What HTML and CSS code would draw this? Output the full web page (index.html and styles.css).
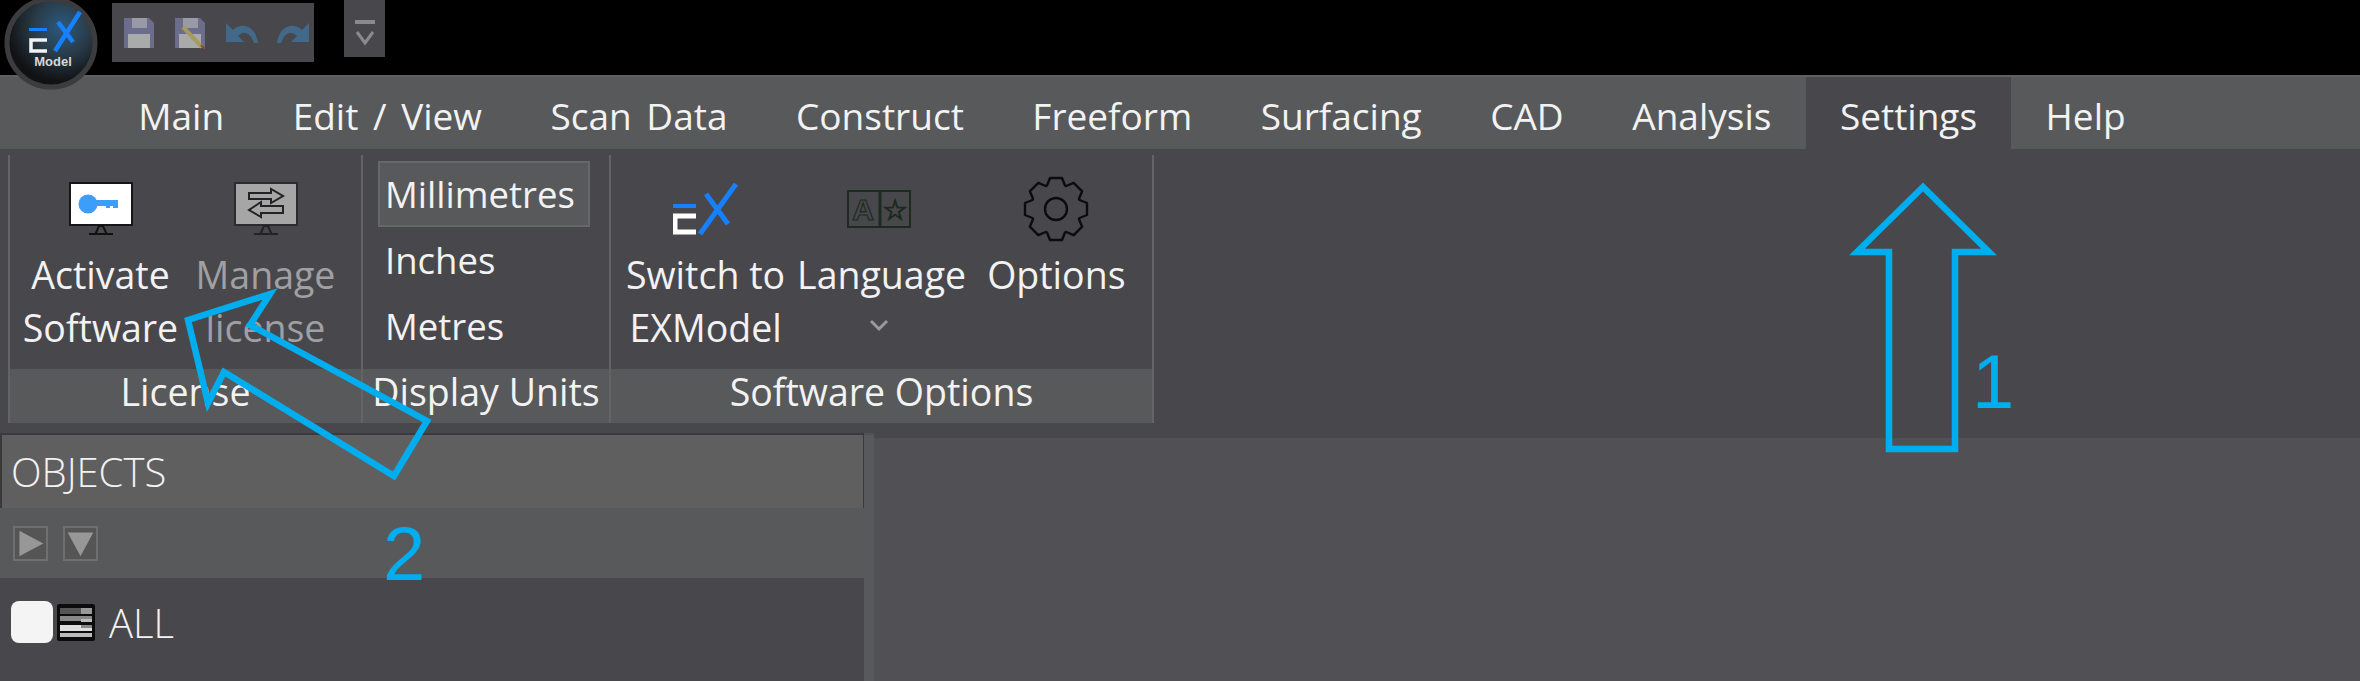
FILE: index.html
```html
<!DOCTYPE html>
<html lang="en">
<head>
    <meta charset="UTF-8">
    <meta name="viewport" content="width=device-width, initial-scale=1.0">
    <title>EXModel - Settings</title>
    <link rel="stylesheet" href="styles.css">
</head>
<body>
    <!-- title bar -->
    <div class="titlebar">
        <div class="qat">
            <svg class="qat-icon" width="32" height="32" viewBox="0 0 32 32">
                <path d="M1 1H26L31 6V31H1Z" fill="#6c6c8c"/>
                <rect x="9" y="1" width="15" height="10" fill="#9a9aa6"/>
                <rect x="5" y="17" width="22" height="14" fill="#a9abab"/>
            </svg>
            <svg class="qat-icon" width="32" height="32" viewBox="0 0 32 32">
                <path d="M1 1H26L31 6V31H1Z" fill="#6c6c8c"/>
                <rect x="9" y="1" width="15" height="10" fill="#9a9aa6"/>
                <rect x="5" y="17" width="22" height="14" fill="#a9abab"/>
                <path d="M9 10L28 30" stroke="#a89a5c" stroke-width="4"/>
                <path d="M27 28L31 32" stroke="#8a4a40" stroke-width="2"/>
            </svg>
            <svg class="qat-icon" width="33" height="22" viewBox="0 0 33 22">
                <path d="M1 1V20H19L13 14C19 8 25 10 29 21H33C31 5 18 -1 8 8Z" fill="#43698a"/>
            </svg>
            <svg class="qat-icon" width="33" height="22" viewBox="0 0 33 22">
                <path d="M32 1V20H14L20 14C14 8 8 10 4 21H0C2 5 15 -1 25 8Z" fill="#43698a"/>
            </svg>
        </div>
        <div class="qat-more">
            <svg width="20" height="25" viewBox="0 0 20 25">
                <rect x="0" y="0" width="20" height="4" fill="#8a8a8c"/>
                <path d="M2 12L10 23L18 12" fill="none" stroke="#8a8a8c" stroke-width="3"/>
            </svg>
        </div>
    </div>

    <!-- app button -->
    <svg class="logo" width="100" height="92" viewBox="0 0 100 92">
        <defs>
            <radialGradient id="logoFill" cx="0.62" cy="0.32" r="0.62">
                <stop offset="0" stop-color="#2b5a80"/>
                <stop offset="0.5" stop-color="#2a3c4a"/>
                <stop offset="1" stop-color="#111214"/>
            </radialGradient>
        </defs>
        <circle cx="51" cy="44" r="44" fill="url(#logoFill)" stroke="#3c3c3e" stroke-width="5"/>
        <rect x="29" y="29" width="18" height="3" fill="#1681ff"/>
        <path d="M47 41H31V52H47" fill="none" stroke="#f2f2f2" stroke-width="3.5"/>
        <path d="M55 52L80 13M58 23L73 43" fill="none" stroke="#1681ff" stroke-width="4.5"/>
        <text x="53" y="67" class="logo-text">Model</text>
    </svg>

    <!-- tabs -->
    <div class="menubar">
        <div class="tab">Main</div>
        <div class="tab">Edit / View</div>
        <div class="tab">Scan Data</div>
        <div class="tab">Construct</div>
        <div class="tab">Freeform</div>
        <div class="tab">Surfacing</div>
        <div class="tab">CAD</div>
        <div class="tab">Analysis</div>
        <div class="tab active">Settings</div>
        <div class="tab">Help</div>
    </div>

    <!-- ribbon -->
    <div class="ribbon">
        <div class="group group-license">
            <div class="group-body">
                <div class="rb-btn wide">
                    <div class="rb-icon">
                        <svg width="64" height="53" viewBox="0 0 64 53">
                            <rect x="1" y="1" width="62" height="42" fill="#fff" stroke="#151618" stroke-width="2"/>
                            <path d="M26 53L30 44H34L38 53M20 52H44" fill="none" stroke="#111" stroke-width="2"/>
                            <circle cx="19" cy="22" r="9.5" fill="#3d9dfb"/>
                            <path d="M26 18H49V26H44V24H41V26H37V24H26Z" fill="#3d9dfb"/>
                        </svg>
                    </div>
                    <div class="rb-text">Activate<br>Software</div>
                </div>
                <div class="rb-btn wide disabled">
                    <div class="rb-icon">
                        <svg width="64" height="53" viewBox="0 0 64 53">
                            <rect x="1" y="1" width="62" height="42" fill="#a6a6a6" stroke="#2c2c2e" stroke-width="2"/>
                            <path d="M26 53L30 44H34L38 53M20 52H44" fill="none" stroke="#222" stroke-width="2"/>
                            <path d="M15 11H37V7L49 14L37 21V17H15Z" fill="none" stroke="#232325" stroke-width="2"/>
                            <path d="M49 24H27V20L15 28L27 35V31H49Z" fill="none" stroke="#232325" stroke-width="2"/>
                        </svg>
                    </div>
                    <div class="rb-text">Manage<br>license</div>
                </div>
            </div>
            <div class="group-label">License</div>
        </div>

        <div class="group group-units">
            <div class="group-body units">
                <div class="unit selected">Millimetres</div>
                <div class="unit">Inches</div>
                <div class="unit">Metres</div>
            </div>
            <div class="group-label">Display Units</div>
        </div>

        <div class="group group-options">
            <div class="group-body">
                <div class="rb-btn">
                    <div class="rb-icon">
                        <svg width="65" height="52" viewBox="0 0 65 52">
                            <rect x="0" y="21" width="23" height="4" fill="#1681ff"/>
                            <path d="M23 33H2V49H23" fill="none" stroke="#fff" stroke-width="5"/>
                            <path d="M27 51L63 1M33 11L55 41" fill="none" stroke="#1681ff" stroke-width="5"/>
                        </svg>
                    </div>
                    <div class="rb-text">Switch to<br>EXModel</div>
                </div>
                <div class="rb-btn lang">
                    <div class="rb-icon">
                        <svg width="64" height="38" viewBox="0 0 64 38">
                            <rect x="1" y="1" width="62" height="36" fill="none" stroke="#1d2a20" stroke-width="2"/>
                            <path d="M33 1V37" stroke="#1d2a20" stroke-width="3"/>
                            <text x="16" y="30" class="lang-glyph">A</text>
                            <text x="48" y="30" class="lang-glyph star">☆</text>
                        </svg>
                    </div>
                    <div class="rb-text">Language<br><span class="chevron">
                        <svg width="20" height="13" viewBox="0 0 20 13">
                            <path d="M2 2L10 10L18 2" fill="none" stroke="#9a9a9c" stroke-width="3"/>
                        </svg>
                    </span></div>
                </div>
                <div class="rb-btn">
                    <div class="rb-icon">
                        <svg width="66" height="66" viewBox="0 0 66 66">
                            <g transform="translate(33,33)" fill="none" stroke="#0c0c0e" stroke-width="2.4" stroke-linejoin="round">
                                <polygon points="-9,-23.5 -6,-31 6,-31 9,-23.5 10.25,-22.98 17.68,-26.16 26.16,-17.68 22.98,-10.25 23.5,-9 31,-6 31,6 23.5,9 22.98,10.25 26.16,17.68 17.68,26.16 10.25,22.98 9,23.5 6,31 -6,31 -9,23.5 -10.25,22.98 -17.68,26.16 -26.16,17.68 -22.98,10.25 -23.5,9 -31,6 -31,-6 -23.5,-9 -22.98,-10.25 -26.16,-17.68 -17.68,-26.16 -10.25,-22.98"/>
                                <circle r="11"/>
                            </g>
                        </svg>
                    </div>
                    <div class="rb-text">Options</div>
                </div>
            </div>
            <div class="group-label">Software Options</div>
        </div>
    </div>

    <!-- objects panel and view -->
    <div class="workspace">
        <div class="objects">
            <div class="objects-head">OBJECTS</div>
            <div class="objects-tools">
                <div class="tool-btn">
                    <svg viewBox="0 0 34 34"><path d="M4 2L32 17L4 32Z" fill="#979797"/></svg>
                </div>
                <div class="tool-btn">
                    <svg viewBox="0 0 34 34"><path d="M2 4H32L17 32Z" fill="#979797"/></svg>
                </div>
            </div>
            <div class="objects-row">
                <div class="check"></div>
                <svg class="layers" width="38" height="37" viewBox="0 0 38 37">
                    <rect width="38" height="37" rx="2" fill="#0c0c0c"/>
                    <rect x="3" y="4" width="32" height="6" fill="#555"/>
                    <rect x="24" y="4" width="11" height="6" fill="#999"/>
                    <rect x="3" y="12" width="32" height="5" fill="#888"/>
                    <rect x="24" y="15" width="11" height="3" fill="#bbb"/>
                    <rect x="3" y="21" width="32" height="6" fill="#ddd"/>
                    <rect x="24" y="21" width="11" height="3" fill="#888"/>
                    <rect x="3" y="29" width="32" height="4" fill="#bbb"/>
                </svg>
                <span class="row-name">ALL</span>
            </div>
        </div>
        <div class="splitter"></div>
        <div class="view"></div>
    </div>

    <!-- annotations -->
    <svg class="marks" width="2360" height="681" viewBox="0 0 2360 681">
        <polygon points="1923,187 1989,252 1955,252 1955,449 1889,449 1889,252 1857,252" class="mark-line"/>
        <polygon points="188,320 270,294 250,325 427,421 394,476 224,372 208,403" class="mark-line"/>
    </svg>
    <span class="mark-num num-one">1</span>
    <span class="mark-num num-two">2</span>
</body>
</html>
```

FILE: styles.css
```css
html, body {
    margin: 0;
    padding: 0;
    height: 681px;
    overflow: hidden;
}
body {
    position: relative;
    font-family: "Open Sans", "Noto Sans", sans-serif;
    font-size: 37.5px;
    color: #f2f2f2;
    background-color: #515155;
}
.titlebar {
    height: 75px;
    background-color: #000;
    display: flex;
    align-items: flex-start;
    padding-left: 112px;
    box-sizing: border-box;
}
.qat {
    width: 202px;
    height: 59px;
    margin-top: 3px;
    background-color: #48484c;
    display: flex;
    align-items: center;
    padding-left: 11px;
    gap: 19px;
    box-sizing: border-box;
}
.qat-icon {
    flex: none;
}
.qat-more {
    width: 41px;
    height: 57px;
    margin-left: 30px;
    background-color: #48484c;
    display: flex;
    align-items: center;
    justify-content: center;
    padding-top: 8px;
    box-sizing: border-box;
}
.logo {
    position: absolute;
    left: 0;
    top: -1px;
}
.logo-text {
    font-family: "Liberation Sans", sans-serif;
    font-size: 13px;
    font-weight: bold;
    fill: #d8d8d8;
    text-anchor: middle;
}
.menubar {
    height: 74px;
    background-color: #58595b;
    border-top: 2px solid #5f6062;
    box-sizing: border-box;
    display: flex;
    padding-left: 104px;
    font-size: 37px;
    word-spacing: 5px;
}
.tab {
    padding: 0 34.25px;
    line-height: 78px;
    height: 72px;
    white-space: nowrap;
}
.tab.active {
    background-color: #48484c;
}
.ribbon {
    height: 284px;
    background-color: #48484c;
    display: flex;
    padding: 6px 0 0 8px;
    box-sizing: border-box;
}
.group {
    height: 268px;
    border-right: 2px solid #636466;
    display: flex;
    flex-direction: column;
    box-sizing: border-box;
}
.group-license {
    width: 355px;
    border-left: 2px solid #636466;
}
.group-units {
    width: 248px;
}
.group-options {
    width: 543px;
}
.group-body {
    height: 214px;
    display: flex;
    box-sizing: border-box;
}
.group-license .group-body {
    padding-left: 8px;
}
.group-options .group-body {
    padding-left: 9px;
    gap: 3px;
}
.group-label {
    height: 54px;
    line-height: 46px;
    background-color: #58595b;
    text-align: center;
    white-space: nowrap;
}
.rb-btn {
    padding: 0 6px;
    text-align: center;
    white-space: nowrap;
}
.rb-btn.wide {
    width: 165px;
    padding: 0;
}
.rb-btn.lang {
    margin: 0 6px 0 -3px;
}
.rb-icon {
    height: 79px;
    padding-top: 14px;
    display: flex;
    align-items: center;
    justify-content: center;
}
.lang .rb-icon {
    padding-right: 6px;
}
.rb-text {
    line-height: 53px;
}
.chevron {
    display: block;
    padding-right: 6px;
}
.chevron svg {
    display: block;
    margin: 18px auto 0;
}
.disabled .rb-text {
    color: #a0a0a2;
}
.lang-glyph {
    font-family: "Liberation Sans", sans-serif;
    font-size: 30px;
    font-weight: bold;
    fill: none;
    stroke: #1d2a20;
    stroke-width: 1.2;
    text-anchor: middle;
}
.lang-glyph.star {
    font-family: "DejaVu Sans", sans-serif;
    font-size: 28px;
}
.units {
    flex-direction: column;
    padding: 6px 0 0 15px;
    font-size: 36.5px;
}
.unit {
    width: 212px;
    height: 66px;
    line-height: 62px;
    padding-left: 5px;
    box-sizing: border-box;
    border: 2px solid transparent;
}
.unit.selected {
    background-color: #58595b;
    border-color: #666769;
}
.workspace {
    height: 248px;
    display: flex;
}
.objects {
    width: 864px;
    border-top: 2px solid #3a3a3c;
    background-color: #48484c;
    flex: none;
    box-sizing: border-box;
}
.objects-head {
    height: 73px;
    line-height: 74px;
    padding-left: 9px;
    font-size: 40px;
    font-weight: 300;
    background-color: #5f5f5f;
    border-left: 2px solid #3a3a3c;
    border-right: 2px solid #3a3a3c;
    box-sizing: border-box;
    margin-right: -1px;
}
.objects-tools {
    height: 70px;
    background-color: #58595b;
    display: flex;
    align-items: center;
    gap: 15px;
    padding-left: 13px;
}
.tool-btn {
    width: 35px;
    height: 35px;
    border: 2px solid #6f6f6f;
    background-color: #555;
    box-sizing: border-box;
    display: flex;
    align-items: center;
    justify-content: center;
}
.tool-btn svg {
    width: 29px;
    height: 29px;
}
.objects-row {
    display: flex;
    align-items: center;
    height: 88px;
    padding-left: 11px;
}
.check {
    width: 42px;
    height: 42px;
    background-color: #f4f4f4;
    border-radius: 8px;
}
.layers {
    margin-left: 4px;
}
.row-name {
    margin-left: 14px;
    font-size: 40px;
    font-weight: 300;
}
.splitter {
    width: 10px;
    background-color: #58595b;
    margin-top: 2px;
}
.view {
    flex: 1;
    background-color: #515155;
    border-top: 5px solid #48484c;
}
.marks {
    position: absolute;
    left: 0;
    top: 0;
    pointer-events: none;
}
.mark-line {
    fill: none;
    stroke: #00aeef;
    stroke-width: 6.5;
    stroke-miterlimit: 10;
}
.mark-num {
    position: absolute;
    font-family: "Liberation Sans", sans-serif;
    font-size: 76px;
    line-height: 76px;
    color: #00aeef;
}
.num-one {
    left: 1972px;
    top: 344px;
}
.num-two {
    left: 383px;
    top: 516px;
}
```
